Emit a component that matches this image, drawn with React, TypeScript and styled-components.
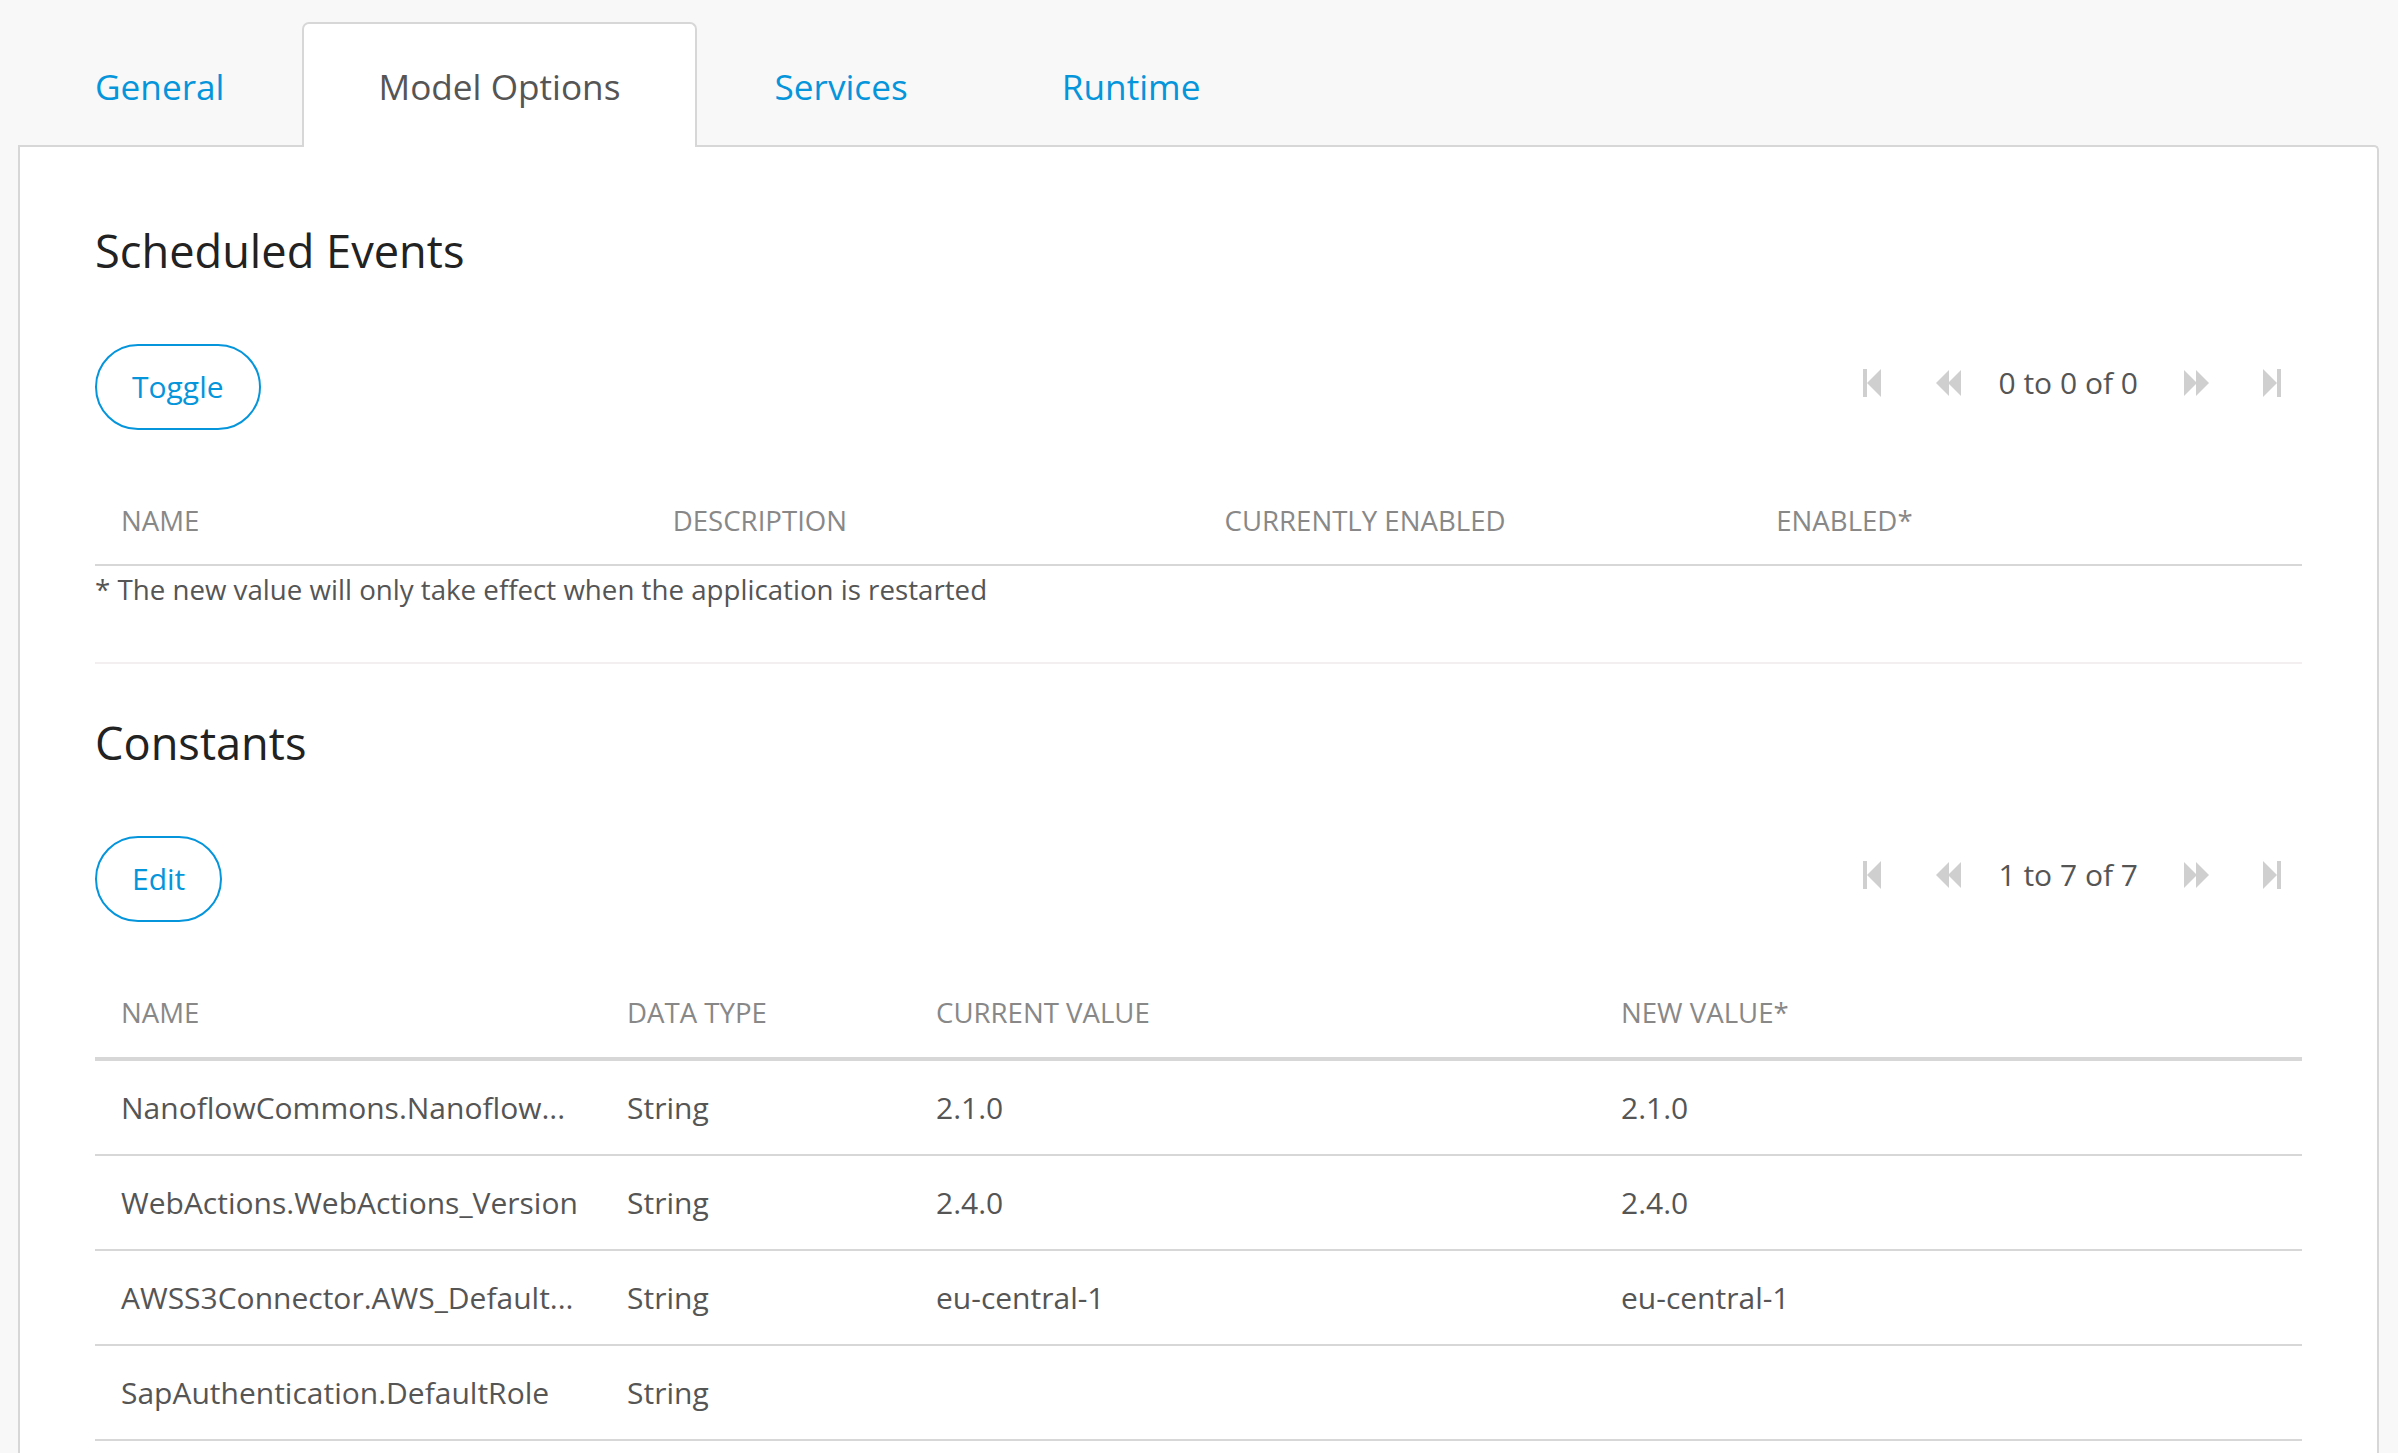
import React from "react";
import styled, { createGlobalStyle } from "styled-components";

const GlobalStyle = createGlobalStyle`
  html, body {
    margin: 0;
    padding: 0;
    background: #f8f8f8;
    font-family: "Open Sans", "Noto Sans", "Liberation Sans", sans-serif;
  }
  * { box-sizing: border-box; }
`;

const Page = styled.div`
  padding: 22px 19px 0 18px;
`;

const TabList = styled.div`
  display: flex;
  position: relative;
  z-index: 1;
`;

const Tab = styled.div<{ $active?: boolean }>`
  height: 125px;
  padding: 0 75px;
  display: flex;
  align-items: center;
  border: 2px solid ${(p) => (p.$active ? "#d7d7d7" : "transparent")};
  border-bottom: none;
  border-radius: 7px 7px 0 0;
  margin-bottom: -2px;
  background: ${(p) => (p.$active ? "#ffffff" : "transparent")};
  color: ${(p) => (p.$active ? "#555555" : "#0595db")};
  font-size: 35.2px;
  line-height: 48px;
  cursor: pointer;
`;

const Panel = styled.div`
  background: #ffffff;
  border: 2px solid #d7d7d7;
  border-bottom: none;
  border-radius: 0 5px 0 0;
  padding: 77px 75px 90px;
`;

const SectionTitle = styled.h2`
  margin: 0;
  font-size: 45.2px;
  line-height: 54px;
  font-weight: 400;
  color: #222222;
`;

const Toolbar = styled.div`
  margin-top: 66px;
  display: flex;
  justify-content: space-between;
  align-items: center;
`;

const OutlineButton = styled.button`
  height: 86px;
  padding: 0 35px;
  border: 2px solid #0595db;
  border-radius: 43px;
  background: #ffffff;
  color: #0595db;
  font-family: inherit;
  font-size: 30px;
  line-height: 40px;
  cursor: pointer;
`;

const Pager = styled.div`
  display: flex;
  align-items: center;
  gap: 16px;
  margin-bottom: 9px;
`;

const PagerButton = styled.span`
  width: 60px;
  height: 40px;
  display: flex;
  align-items: center;
  justify-content: center;
  color: #cfcfcf;
`;

const PagerText = styled.span`
  margin: 0 12px 0 4px;
  font-size: 30px;
  line-height: 40px;
  color: #555555;
`;

const Table = styled.table`
  width: 100%;
  margin-top: 46px;
  border-collapse: collapse;
  table-layout: fixed;
`;

const Th = styled.th<{ $thick?: boolean }>`
  text-align: left;
  font-weight: 400;
  font-size: 27.6px;
  line-height: 40px;
  color: #888888;
  padding: 24px 26px ${(p) => (p.$thick ? "25px" : "24px")};
  border-bottom: ${(p) => (p.$thick ? "4px" : "2px")} solid #d7d7d7;
  white-space: nowrap;
`;

const Td = styled.td`
  font-size: 30px;
  line-height: 45px;
  color: #555555;
  padding: 24px 26px;
  border-bottom: 2px solid #d7d7d7;
  white-space: nowrap;
`;

const Note = styled.div`
  margin-top: 3px;
  font-size: 27.7px;
  line-height: 40px;
  color: #555555;
`;

const Divider = styled.hr`
  border: none;
  height: 2px;
  background: #f3eff0;
  margin: 53px 0 52px;
`;

const FirstIcon = () => (
  <svg width="18" height="28" viewBox="0 0 18 28" fill="currentColor">
    <rect x="0" y="0" width="4" height="28" />
    <polygon points="18,0 4,14 18,28" />
  </svg>
);

const PrevIcon = () => (
  <svg width="25" height="26" viewBox="0 0 25 26" fill="currentColor">
    <polygon points="13,0 0,13 13,26" />
    <polygon points="25,0 12,13 25,26" />
  </svg>
);

const NextIcon = () => (
  <svg width="25" height="26" viewBox="0 0 25 26" fill="currentColor">
    <polygon points="0,0 13,13 0,26" />
    <polygon points="12,0 25,13 12,26" />
  </svg>
);

const LastIcon = () => (
  <svg width="18" height="28" viewBox="0 0 18 28" fill="currentColor">
    <polygon points="0,0 14,14 0,28" />
    <rect x="14" y="0" width="4" height="28" />
  </svg>
);

const Paging: React.FC<{ label: string }> = ({ label }) => (
  <Pager>
    <PagerButton><FirstIcon /></PagerButton>
    <PagerButton><PrevIcon /></PagerButton>
    <PagerText>{label}</PagerText>
    <PagerButton><NextIcon /></PagerButton>
    <PagerButton><LastIcon /></PagerButton>
  </Pager>
);

const constants = [
  { name: "NanoflowCommons.Nanoflow...", type: "String", current: "2.1.0", next: "2.1.0" },
  { name: "WebActions.WebActions_Version", type: "String", current: "2.4.0", next: "2.4.0" },
  { name: "AWSS3Connector.AWS_Default...", type: "String", current: "eu-central-1", next: "eu-central-1" },
  { name: "SapAuthentication.DefaultRole", type: "String", current: "", next: "" },
];

export default function App() {
  return (
    <>
      <GlobalStyle />
      <Page>
        <TabList>
          <Tab>General</Tab>
          <Tab $active>Model Options</Tab>
          <Tab>Services</Tab>
          <Tab>Runtime</Tab>
        </TabList>
        <Panel>
          <SectionTitle>Scheduled Events</SectionTitle>
          <Toolbar>
            <OutlineButton>Toggle</OutlineButton>
            <Paging label="0 to 0 of 0" />
          </Toolbar>
          <Table>
            <colgroup>
              <col style={{ width: "25%" }} />
              <col style={{ width: "25%" }} />
              <col style={{ width: "25%" }} />
              <col style={{ width: "25%" }} />
            </colgroup>
            <thead>
              <tr>
                <Th>NAME</Th>
                <Th>DESCRIPTION</Th>
                <Th>CURRENTLY ENABLED</Th>
                <Th>ENABLED*</Th>
              </tr>
            </thead>
          </Table>
          <Note>* The new value will only take effect when the application is restarted</Note>
          <Divider />
          <SectionTitle>Constants</SectionTitle>
          <Toolbar>
            <OutlineButton>Edit</OutlineButton>
            <Paging label="1 to 7 of 7" />
          </Toolbar>
          <Table>
            <colgroup>
              <col style={{ width: "506px" }} />
              <col style={{ width: "309px" }} />
              <col style={{ width: "685px" }} />
              <col />
            </colgroup>
            <thead>
              <tr>
                <Th $thick>NAME</Th>
                <Th $thick>DATA TYPE</Th>
                <Th $thick>CURRENT VALUE</Th>
                <Th $thick>NEW VALUE*</Th>
              </tr>
            </thead>
            <tbody>
              {constants.map((c) => (
                <tr key={c.name}>
                  <Td>{c.name}</Td>
                  <Td>{c.type}</Td>
                  <Td>{c.current}</Td>
                  <Td>{c.next}</Td>
                </tr>
              ))}
            </tbody>
          </Table>
        </Panel>
      </Page>
    </>
  );
}
